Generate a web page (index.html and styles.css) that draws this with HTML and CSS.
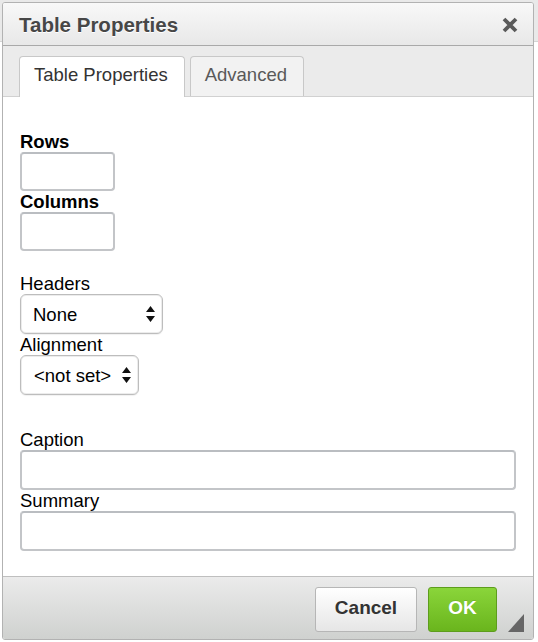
FILE: index.html
```html
<!DOCTYPE html>
<html lang="en">
<head>
<meta charset="utf-8">
<title>Table Properties</title>
<link rel="stylesheet" href="styles.css">
</head>
<body>
<div class="editor-toolbar"></div>
<div class="dialog" role="dialog" aria-labelledby="dlg-title">
  <div class="dialog-title">
    <h1 id="dlg-title">Table Properties</h1>
    <span class="close" aria-label="Close">
      <svg width="16" height="16" viewBox="0 0 16 16"><path d="M2 2 L14 14 M14 2 L2 14" stroke="#5a5a5a" stroke-width="3.8" stroke-linecap="butt"/></svg>
    </span>
  </div>
  <div class="tabs">
    <div class="tab active">Table Properties</div>
    <div class="tab">Advanced</div>
  </div>
  <div class="content">
    <div class="group">
      <div class="field">
        <label class="label bold">Rows</label>
        <input class="text short" type="text">
      </div>
      <div class="field">
        <label class="label bold">Columns</label>
        <input class="text short" type="text">
      </div>
    </div>
    <div class="group group-2">
      <div class="field">
        <label class="label">Headers</label>
        <div class="select-wrap headers">
          <select class="select"><option>None</option></select>
          <svg class="arrows" width="9" height="16" viewBox="0 0 9 16"><path d="M4.5 0 L9 6 L0 6 Z M0 10 L9 10 L4.5 16 Z" fill="#111"/></svg>
        </div>
      </div>
      <div class="field">
        <label class="label">Alignment</label>
        <div class="select-wrap align">
          <select class="select"><option>&lt;not set&gt;</option></select>
          <svg class="arrows" width="9" height="16" viewBox="0 0 9 16"><path d="M4.5 0 L9 6 L0 6 Z M0 10 L9 10 L4.5 16 Z" fill="#111"/></svg>
        </div>
      </div>
    </div>
    <div class="group group-3">
      <div class="field">
        <label class="label">Caption</label>
        <input class="text wide" type="text">
      </div>
      <div class="field">
        <label class="label">Summary</label>
        <input class="text wide" type="text">
      </div>
    </div>
  </div>
  <div class="footer">
    <button class="btn cancel">Cancel</button>
    <button class="btn ok">OK</button>
    <svg class="grip" width="16" height="18" viewBox="0 0 16 18"><path d="M16 0 L16 18 L0 18 Z" fill="#666"/></svg>
  </div>
</div>
</body>
</html>
```
FILE: styles.css
```css
* { box-sizing: border-box; }
html, body { margin: 0; padding: 0; }
body {
  width: 538px;
  height: 642px;
  position: relative;
  overflow: hidden;
  background: #fff;
  font-family: "Liberation Sans", Arial, Helvetica, sans-serif;
}
.editor-toolbar {
  height: 42px;
  background: #e9e9e9;
  border-bottom: 1px solid #d4d4d4;
}
.dialog {
  position: absolute;
  left: 2px;
  top: 2px;
  width: 532px;
  height: 638px;
  border: 1px solid #b2b2b2;
  border-radius: 3px;
  background: #fff;
  display: flex;
  flex-direction: column;
  overflow: hidden;
}
.dialog-title {
  flex: none;
  height: 43px;
  border-bottom: 1px solid #a9a9a9;
  background: linear-gradient(#f8f8f8, #e8e8e8);
  display: flex;
  align-items: center;
  justify-content: space-between;
  padding: 0 15px 0 16px;
}
.dialog-title h1 {
  margin: 0;
  padding-top: 2px;
  font-size: 20.5px;
  line-height: 24px;
  font-weight: bold;
  color: #474747;
  text-shadow: 0 1px 0 #fff;
}
.close {
  display: flex;
  width: 16px;
  height: 16px;
  margin-top: 1px;
}
.tabs {
  flex: none;
  height: 51px;
  background: #ebebeb;
  border-bottom: 1px solid #d1d1d1;
  display: flex;
  align-items: flex-end;
  gap: 5px;
  padding-left: 16px;
}
.tab {
  height: 40px;
  padding: 0 16px 0 14px;
  border: 1px solid #c8c8c8;
  border-bottom: none;
  border-radius: 4px 4px 0 0;
  background: #f2f2f2;
  color: #595959;
  font-size: 18.5px;
  line-height: 35px;
}
.tab.active {
  height: 41px;
  margin-bottom: -1px;
  background: #fff;
  color: #333;
}
.content {
  flex: 1;
  padding: 34px 17px 0;
  background: #fff;
}
.group-2 { margin-top: 22px; }
.group-3 { margin-top: 34px; }
.field { display: flex; flex-direction: column; align-items: flex-start; }
.label {
  display: block;
  font-size: 18.5px;
  line-height: 21px;
  color: #000;
}
.label.bold { font-weight: bold; }
.text {
  display: block;
  height: 39px;
  margin: 0;
  border: 2px solid #c3c5c8;
  border-top-color: #babdc1;
  border-radius: 4px;
  background: #fff;
  font: inherit;
}
.text.short { width: 95px; }
.text.wide { width: 100%; height: 40px; }
.field:has(.wide) { align-items: stretch; }
.select-wrap {
  position: relative;
  height: 40px;
}
.select-wrap.headers { width: 143px; }
.select-wrap.align { width: 119px; }
.select {
  appearance: none;
  -webkit-appearance: none;
  width: 100%;
  height: 100%;
  margin: 0;
  padding: 0 0 0 12px;
  border: 1px solid #bdbdbd;
  border-radius: 6px;
  background: #fff;
  box-shadow: 0 1px 1px rgba(0,0,0,0.06), inset 0 0 0 1px #ececec;
  color: #000;
  font-family: inherit;
  font-size: 18.5px;
}
.select-wrap.align .select { padding-left: 13px; }
.arrows {
  position: absolute;
  right: 8px;
  top: 12px;
}
.footer {
  flex: none;
  height: 63px;
  position: relative;
  border-top: 1px solid #bfbfbf;
  background: linear-gradient(#ebebeb, #cfd1cf);
  display: flex;
  justify-content: flex-end;
  align-items: flex-start;
  gap: 11px;
  padding: 10px 36px 0 0;
}
.btn {
  height: 45px;
  margin: 0;
  padding: 0 0 3px;
  border-radius: 3px;
  font-family: inherit;
  font-size: 19px;
  font-weight: bold;
}
.btn.cancel {
  width: 102px;
  border: 1px solid #b6b6b6;
  background: linear-gradient(#ffffff, #e6e6e6);
  color: #333;
}
.btn.ok {
  width: 69px;
  border: 1px solid #5d9d1c;
  background: linear-gradient(#8ad53a, #6ab51d);
  color: #fff;
  text-shadow: 0 -1px 0 rgba(0,0,0,0.1);
}
.grip {
  position: absolute;
  right: 9px;
  bottom: 7px;
}
```
